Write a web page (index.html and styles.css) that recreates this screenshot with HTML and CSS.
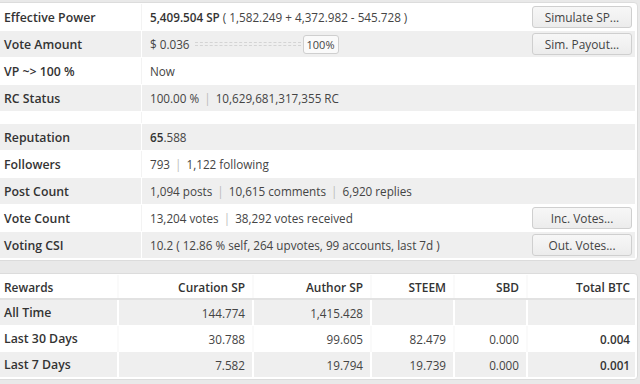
FILE: index.html
```html
<!DOCTYPE html>
<html lang="en">
<head>
  <meta charset="UTF-8">
  <title>Account Info</title>
  <link rel="stylesheet" href="styles.css">
</head>
<body>
  <!-- Account overview -->
  <div class="panel">
    <table class="info">
      <tr>
        <th>Effective Power</th>
        <td><b>5,409.504 SP</b> ( 1,582.249 + 4,372.982 - 545.728 )</td>
        <td class="act"><button>Simulate SP...</button></td>
      </tr>
      <tr class="alt">
        <th>Vote Amount</th>
        <td>
          <span class="vote">$ 0.036 <span class="track"></span><span class="pct">100%</span></span>
        </td>
        <td class="act"><button>Sim. Payout...</button></td>
      </tr>
      <tr>
        <th>VP ~&gt; 100 %</th>
        <td>Now</td>
        <td class="act"></td>
      </tr>
      <tr class="alt">
        <th>RC Status</th>
        <td>100.00 % <span class="sep">|</span> 10,629,681,317,355 RC</td>
        <td class="act"></td>
      </tr>
      <tr class="gap">
        <th></th><td></td><td class="act"></td>
      </tr>
      <tr class="alt">
        <th>Reputation</th>
        <td><b>65</b>.588</td>
        <td class="act"></td>
      </tr>
      <tr>
        <th>Followers</th>
        <td>793 <span class="sep">|</span> 1,122 following</td>
        <td class="act"></td>
      </tr>
      <tr class="alt">
        <th>Post Count</th>
        <td>1,094 posts <span class="sep">|</span> 10,615 comments <span class="sep">|</span> 6,920 replies</td>
        <td class="act"></td>
      </tr>
      <tr>
        <th>Vote Count</th>
        <td>13,204 votes <span class="sep">|</span> 38,292 votes received</td>
        <td class="act"><button>Inc. Votes...</button></td>
      </tr>
      <tr class="alt">
        <th>Voting CSI</th>
        <td>10.2 ( 12.86 % self, 264 upvotes, 99 accounts, last 7d )</td>
        <td class="act"><button>Out. Votes...</button></td>
      </tr>
    </table>
  </div>

  <!-- Rewards summary -->
  <div class="panel">
    <table class="rewards">
      <colgroup>
        <col class="w-name">
        <col class="w-cur">
        <col class="w-auth">
        <col class="w-steem">
        <col class="w-sbd">
        <col>
      </colgroup>
      <tr class="head">
        <th class="name">Rewards</th>
        <th>Curation SP</th>
        <th>Author SP</th>
        <th>STEEM</th>
        <th>SBD</th>
        <th class="last">Total BTC</th>
      </tr>
      <tr class="alt">
        <th class="name">All Time</th>
        <td>144.774</td>
        <td>1,415.428</td>
        <td></td>
        <td></td>
        <td class="last"></td>
      </tr>
      <tr>
        <th class="name">Last 30 Days</th>
        <td>30.788</td>
        <td>99.605</td>
        <td>82.479</td>
        <td>0.000</td>
        <td class="last"><b>0.004</b></td>
      </tr>
      <tr class="alt">
        <th class="name">Last 7 Days</th>
        <td>7.582</td>
        <td>19.794</td>
        <td>19.739</td>
        <td>0.000</td>
        <td class="last"><b>0.001</b></td>
      </tr>
    </table>
  </div>
</body>
</html>
```

FILE: styles.css
```css
body {
  margin: 0;
  padding: 2px 2px 0 0;
  background-color: #e9e9e9;
  font-family: "Open Sans", Arial, sans-serif;
  font-size: 11.7px;
  color: #444;
}


.panel {
  margin: 0 0 12px -4px;
  background-color: #fff;
  border: 1px solid #dcdcdc;
  border-radius: 4px;
  padding: 1px 2px 1px 0;
}

table {
  width: 100%;
  border-collapse: collapse;
}

th {
  text-align: left;
  font-weight: 600;
  color: #333;
}

b {
  font-weight: 600;
  color: #333;
}

tr.alt {
  background-color: #efefef;
}


/* account overview */

.info th,
.info td {
  height: 26px;
  padding: 0 8px;
  border-bottom: 1px solid #fff;
  white-space: nowrap;
}

.info th {
  width: 130px;
  padding-left: 7px;
  padding-right: 7px;
  border-right: 1px solid #f3f3f3;
  font-size: 12.3px;
}

.info tr.alt th {
  border-right-color: #fff;
}

.info tr.gap th,
.info tr.gap td {
  height: 11px;
}

.info .act {
  width: 104px;
  padding: 0 3px 0 0;
  text-align: right;
}

.sep {
  color: #bbb;
  margin: 0 2px;
}

button {
  width: 100px;
  height: 22px;
  padding: 0;
  font-family: "Open Sans", Arial, sans-serif;
  font-size: 11.9px;
  color: #444;
  background: linear-gradient(#f7f7f7, #ececec);
  border: 1px solid #cfcfcf;
  border-radius: 3px;
  vertical-align: middle;
}

.vote {
  display: inline-flex;
  align-items: center;
}

.track {
  width: 106px;
  margin: 0 2px 0 5px;
  border-top: 1px dashed #d4d4d4;
  border-bottom: 1px dashed #d4d4d4;
  height: 2px;
}

.pct {
  padding: 1px 3px;
  border: 1px solid #cfcfcf;
  border-radius: 3px;
  background-color: #fafafa;
  font-size: 11px;
}


/* rewards */

.rewards {
  table-layout: fixed;
}

.rewards .w-name { width: 121px; }
.rewards .w-cur { width: 135px; }
.rewards .w-auth { width: 118px; }
.rewards .w-steem { width: 83px; }
.rewards .w-sbd { width: 73px; }

.rewards th,
.rewards td {
  height: 25px;
  padding: 0 7px 0 0;
  text-align: right;
  border-bottom: 1px solid #fff;
  border-left: 2px solid #fafafa;
  white-space: nowrap;
}

.rewards tr.alt td,
.rewards tr.alt th {
  border-left-color: #fff;
}

.rewards .name {
  text-align: left;
  border-left: none;
  padding-left: 7px;
  font-size: 12.3px;
}

.rewards .last {
  padding-right: 5px;
}

.rewards .head th {
  height: 23px;
  border-bottom: 2px solid #e2e2e2;
  font-size: 11.9px;
}
```
